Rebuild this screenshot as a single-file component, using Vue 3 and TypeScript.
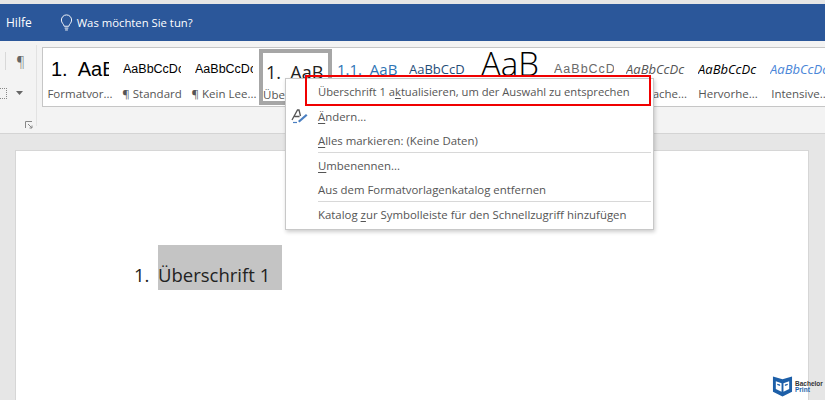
<script setup lang="ts">
interface StyleItem {
  sample: string
  label: string
  cls: string
}

interface MenuItem {
  before: string
  key: string
  after: string
  sepAfter?: boolean
  icon?: boolean
  active?: boolean
}

const styles: StyleItem[] = [
  { sample: '1.  AaB', label: 'Formatvor...', cls: 's-format' },
  { sample: 'AaBbCcDc', label: '¶ Standard', cls: 's-normal' },
  { sample: 'AaBbCcDc', label: '¶ Kein Lee...', cls: 's-normal' },
  { sample: '1.  AaB', label: 'Überschrift 1', cls: 's-h1' },
  { sample: '1.1.  AaB', label: 'Überschrift 2', cls: 's-h2' },
  { sample: 'AaBbCcD', label: 'Überschrift 3', cls: 's-h3' },
  { sample: 'AaB', label: 'Titel', cls: 's-title' },
  { sample: 'AaBbCcD', label: 'Untertitel', cls: 's-sub' },
  { sample: 'AaBbCcDc', label: 'Schwache...', cls: 's-weak' },
  { sample: 'AaBbCcDc', label: 'Hervorhe...', cls: 's-strong' },
  { sample: 'AaBbCcDc', label: 'Intensive...', cls: 's-intense' },
]

const menu: MenuItem[] = [
  { before: 'Überschrift 1 a', key: 'k', after: 'tualisieren, um der Auswahl zu entsprechen', active: true },
  { before: '', key: 'Ä', after: 'ndern...', icon: true },
  { before: '', key: 'A', after: 'lles markieren: (Keine Daten)', sepAfter: true },
  { before: '', key: 'U', after: 'mbenennen...' },
  { before: 'Aus dem Formatvorla', key: 'g', after: 'enkatalog entfernen', sepAfter: true },
  { before: 'Katalog ', key: 'z', after: 'ur Symbolleiste für den Schnellzugriff hinzufügen' },
]
</script>

<template>
  <div class="screen">
    <header class="titlebar">
      <span class="tab">Hilfe</span>
      <span class="tell">
        <svg width="13" height="18" viewBox="0 0 14 18" fill="none" stroke="#fff" stroke-width="1">
          <path d="M4.500 12.500C4 10 1.500 9 1.500 5.800a5.500 5.500 0 0 1 11 0C12.500 9 10 10 9.500 12.500z" />
          <path d="M5 14.500h4M5.500 16.500h3" />
        </svg>
        Was möchten Sie tun?
      </span>
    </header>

    <section class="ribbon">
      <div class="para">
        <div class="para-top"><i class="sep"></i><span class="pilcrow">¶</span></div>
        <div class="para-mid">
          <i class="dotted"></i>
          <svg width="7" height="4" viewBox="0 0 7 4"><path d="M0 0h7L3.500 4z" fill="#666" /></svg>
        </div>
        <svg class="launcher" width="8" height="8" viewBox="0 0 8 8" fill="none" stroke="#888">
          <path d="M0.500 7V0.500H7" />
          <path d="M3 3l4 4M7 4.500V7H4.500" />
        </svg>
      </div>
      <div class="gallery">
        <div
          v-for="item in styles"
          :key="item.label"
          class="style"
          :class="[item.cls, { selected: item.cls === 's-h1' }]"
        >
          <div class="sample">{{ item.sample }}</div>
          <div class="label">{{ item.label }}</div>
        </div>
      </div>
    </section>

    <main class="canvas">
      <article class="page">
        <div class="heading">
          <span class="num">1.</span>
          <span class="selection">Überschrift 1</span>
        </div>
        <div class="logo">
          <svg width="21" height="23" viewBox="0 0 22 23">
            <path d="M1 1l10 3 10-3v16l-10 5-10-5z" fill="#1d5fa8" />
            <path d="M4 6l6 2v9l-6-3zM18 6l-6 2v9l6-3z" fill="#fff" />
            <path d="M5.500 8.500l3 1v1.500l-3-1zM13.500 9.500l3-1v1.500l-3 1z" fill="#1d5fa8" />
          </svg>
          <div class="logo-text"><b>Bachelor</b><b class="print">Print</b></div>
        </div>
      </article>
    </main>

    <div class="context">
      <template v-for="row in menu" :key="row.after">
        <div class="row" :class="{ active: row.active }">
          <span class="gutter">
            <svg v-if="row.icon" width="18" height="16" viewBox="0 0 18 16" fill="none">
              <path d="M1 12L6.500 2h1.500l1.500 6M3.500 8.500h5" stroke="#555" stroke-width="1.300" />
              <path d="M7 13l8-7 1.500 1.500-8 7z" fill="#4a7fc1" />
              <path d="M2 14.500h4" stroke="#4a7fc1" stroke-width="1.200" />
            </svg>
          </span>
          <span class="text">{{ row.before }}<u>{{ row.key }}</u>{{ row.after }}</span>
        </div>
        <div v-if="row.sepAfter" class="divider"></div>
      </template>
      <div class="highlight"></div>
    </div>
  </div>
</template>

<style>
html,
body {
  margin: 0;
  overflow: hidden;
}
</style>

<style scoped>
.screen {
  position: relative;
  width: 825px;
  height: 400px;
  overflow: hidden;
  display: flex;
  flex-direction: column;
  background: #e6e6e6;
  font-family: 'Open Sans', 'Noto Sans', sans-serif;
  color: #444;
}

.titlebar {
  flex: none;
  height: 37px;
  margin-top: 4px;
  background: #2b579a;
  color: #fff;
  display: flex;
  align-items: center;
  gap: 28px;
  padding-left: 6px;
  font-size: 12px;
  box-sizing: border-box;
}

.tell {
  display: flex;
  align-items: center;
  gap: 4px;
  font-size: 11.300px;
}

.ribbon {
  flex: none;
  height: 93px;
  box-sizing: border-box;
  background: #f3f3f3;
  border-bottom: 1px solid #d4d4d4;
  display: flex;
  padding-top: 6px;
}

.para {
  position: relative;
  flex: none;
  width: 37px;
  height: 81px;
  margin-top: -2px;
  border-right: 1px solid #e2e2e2;
  box-sizing: border-box;
}

.para-top {
  display: flex;
  height: 32px;
  align-items: center;
}

.sep {
  width: 1px;
  height: 18px;
  margin-left: 5px;
  background: #d8d8d8;
}

.pilcrow {
  margin-left: 10px;
  font-size: 14px;
  color: #666;
  font-weight: 300;
}

.para-mid {
  display: flex;
  align-items: center;
  height: 20px;
  margin-top: 6px;
  gap: 9px;
}

.dotted {
  width: 6px;
  height: 9px;
  border: 1px dotted #888;
  border-left: 0;
}

.launcher {
  position: absolute;
  left: 25px;
  top: 76px;
}

.gallery {
  flex: 1;
  height: 60px;
  margin-left: 5px;
  padding-left: 1px;
  box-sizing: border-box;
  display: flex;
  background: #fff;
  border: 1px solid #c6c6c6;
  border-right: 0;
  overflow: hidden;
}

.style {
  position: relative;
  flex: none;
  width: 72px;
  height: 58px;
  box-sizing: border-box;
  overflow: hidden;
}

.selected {
  border: 4px solid #a6a6a6;
  height: 56px;
  margin-top: 1px;
  margin-left: -1px;
  width: 73px;
}

.sample {
  height: 34px;
  margin: 0 7px;
  line-height: 43px;
  white-space: pre;
  overflow: hidden;
  color: #000;
  font-family: 'Liberation Sans', sans-serif;
}

.selected .sample {
  height: 30px;
  margin: 0 3px;
  line-height: 39px;
}

.label {
  margin-top: 3px;
  font-size: 11.500px;
  line-height: 18px;
  color: #555;
  white-space: nowrap;
  text-align: center;
}

.s-format .sample {
  font-size: 20px;
}

.s-normal .sample {
  font-size: 12.500px;
}

.selected.s-h1 .sample {
  font-family: 'Open Sans', sans-serif;
  font-size: 18px;
  color: #222;
}

.s-h2 .sample {
  font-family: 'Open Sans', sans-serif;
  font-size: 15px;
  color: #2e74b5;
  margin: 0 2px 0 5px;
}

.s-h3 .sample {
  font-family: 'Open Sans', sans-serif;
  font-size: 13px;
  color: #1f4d78;
  margin: 0 2px 0 5px;
}

.s-title .sample {
  font-family: 'Open Sans', sans-serif;
  font-size: 33px;
  font-weight: 300;
  line-height: 32px;
  margin: 0 4px 0 0;
  text-align: center;
}

.s-sub .sample {
  font-size: 12.500px;
  letter-spacing: 1px;
  color: #6a6a6a;
  margin: 0 6px;
}

.s-weak .sample,
.s-strong .sample,
.s-intense .sample {
  font-family: 'Open Sans', sans-serif;
  font-size: 13px;
  font-style: italic;
  margin: 0 6px;
}

.s-weak .sample {
  color: #555;
}

.s-intense .sample {
  color: #4a86d8;
}

.canvas {
  flex: 1;
  min-height: 0;
  padding: 17px 17px 0 16px;
}

.page {
  position: relative;
  height: 300px;
  background: #fff;
  box-shadow: 0 0 0 1px #d6d6d6;
  padding: 94px 0 0 119px;
  box-sizing: border-box;
}

.heading {
  display: flex;
  align-items: flex-start;
  font-size: 18.500px;
  color: #222;
}

.num {
  width: 23px;
  margin-left: -1px;
  padding-right: 1px;
  line-height: 60px;
  height: 45px;
}

.selection {
  width: 124px;
  height: 45px;
  line-height: 60px;
  background: #c4c4c4;
  overflow: hidden;
  white-space: nowrap;
}

.logo {
  position: absolute;
  left: 756px;
  top: 224px;
  display: flex;
  align-items: center;
  gap: 2px;
}

.logo-text {
  display: flex;
  flex-direction: column;
  font-family: 'Liberation Sans', sans-serif;
  font-size: 6.500px;
  line-height: 6px;
  color: #333;
}

.print {
  color: #1d5fa8;
}

.context {
  position: absolute;
  left: 285px;
  top: 78px;
  width: 369px;
  box-sizing: border-box;
  padding: 0 2px 3px;
  background: #fff;
  border: 1px solid #c8c8c8;
  box-shadow: 1px 2px 4px rgba(0, 0, 0, 0.2);
  font-size: 11.400px;
  color: #555;
}

.row {
  display: flex;
  align-items: center;
  height: 24px;
  white-space: nowrap;
}

.row.active {
  height: 25px;
  font-size: 11.200px;
}

.gutter {
  width: 30px;
  flex: none;
  display: flex;
  justify-content: center;
  padding-right: 6px;
  box-sizing: border-box;
}

.text u {
  text-underline-offset: 2px;
}

.divider {
  height: 1px;
  margin-left: 30px;
  background: #d8d8d8;
}

.highlight {
  position: absolute;
  left: 19px;
  top: -4px;
  width: 346px;
  height: 31px;
  box-sizing: border-box;
  border: 2px solid #f00000;
}
</style>
